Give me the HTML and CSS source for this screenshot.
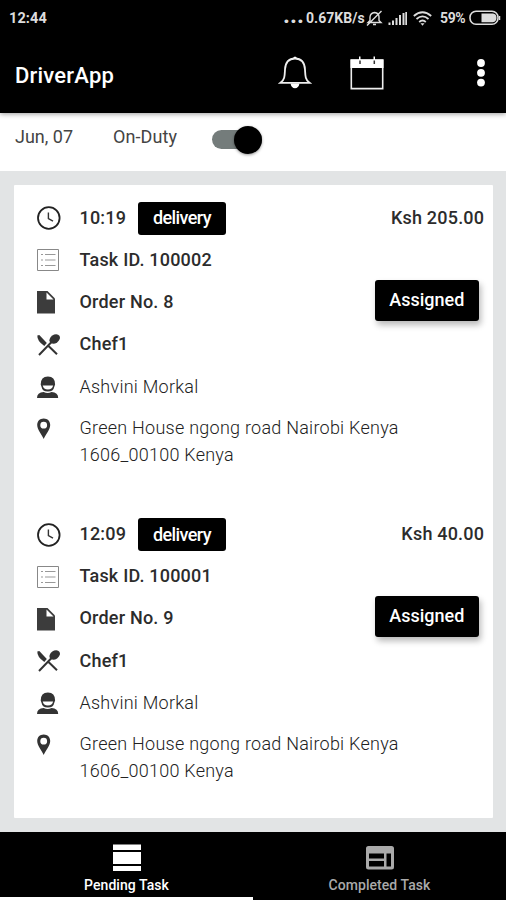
FILE: index.html
```html
<!DOCTYPE html>
<html lang="en">
<head>
<meta charset="utf-8">
<title>DriverApp</title>
<link rel="stylesheet" href="styles.css">
</head>
<body>
<svg class="defs" width="0" height="0">
  <symbol id="clock" viewBox="0 0 24 24"><circle cx="11.8" cy="12" r="10.8" fill="none" stroke="#222" stroke-width="1.8"/><path d="M11.4 6.5v6l4.6 2.7" fill="none" stroke="#333" stroke-width="1.4"/></symbol>
  <symbol id="list" viewBox="0 0 24 24"><path d="M.5 1.500h21v21H.5z" fill="none" stroke="#888" stroke-width="1"/><path d="M4 6.500h2M4 12h2M4 17.500h2M8 6.500h10.500M8 12h10.500M8 17.500h10.500" stroke="#999" stroke-width="1.200"/></symbol>
  <symbol id="doc" viewBox="0 0 24 24"><path d="M0 1h10.500l7.500 7.500V23.500H0z" fill="#3c3c3c"/><path d="M9.500 2.500v7H16.500z" fill="#fff"/></symbol>
  <symbol id="tools" viewBox="0 0 24 24"><path d="M2 22L15.500 8M11 12.500l9 8.800" fill="none" stroke="#333" stroke-width="2"/><path d="M.3 2.500l2-.5 7.500 8-2.500 3Q0 8 .3 2.500z" fill="#333"/><ellipse cx="17.700" cy="6" rx="5.700" ry="4.200" transform="rotate(-35 17.700 6)" fill="#333"/></symbol>
  <symbol id="person" viewBox="0 0 24 24"><path d="M3.700 9.500Q3.700 1.500 10.900 1.500t7.200 8l-.9 2.500Q16.500 16.500 10.900 16.500T4.600 12z" fill="#333"/><path d="M5.700 10.500h10.400q-.8 4-5.200 4t-5.200-4z" fill="#fff"/><path d="M0 23q0-5.500 6.700-6 3.900 2 7.800 0 6.700.5 6.700 6z" fill="#333"/></symbol>
  <symbol id="pin" viewBox="0 0 24 24"><path fill-rule="evenodd" d="M6.700 1.500C2.800 1.500.2 4.300.2 8c0 5 4.500 9 6.500 14 2-5 6.500-9 6.500-14 0-3.700-2.600-6.500-6.500-6.500zm0 3.300a3.400 3.400 0 1 1 0 6.800 3.400 3.400 0 0 1 0-6.800z" fill="#333"/></symbol>
</svg>
<div class="app">
  <header class="top">
    <div class="status">
      <span class="time">12:44</span>
      <span class="dots">...</span>
      <span class="rate">0.67KB/s</span>
      <svg class="mute" width="17" height="17" viewBox="0 0 17 17" fill="none" stroke="#ddd" stroke-width="1.400"><path d="M2 12.500l2-2V7q.5-4 4.500-4.500Q13 3 13 7v3.500l2 2zM7 14.500h3M1 15.500L15.500 1"/></svg>
      <svg class="signal" width="19" height="14" viewBox="0 0 19 14" stroke="#ddd" stroke-width="2"><path d="M1.500 11.500V14M5 9.500V14M8.500 7V14M12 4V14M15.500 2V14M18.300 1V14"/></svg>
      <svg class="wifi" width="19" height="15" viewBox="0 0 19 15" fill="none" stroke="#ddd" stroke-width="1.800"><path d="M.8 5Q9.500-2.500 18.200 5M3.500 8Q9.500 2.800 15.500 8M6.200 11Q9.500 8 12.800 11"/><path d="M7.500 12.300h4L9.500 14.800z" fill="#ddd" stroke="none"/></svg>
      <span class="pct">59%</span>
      <svg class="battery" width="32" height="16" viewBox="0 0 32 16"><rect x="1" y="1.200" width="28" height="13" rx="6" fill="none" stroke="#ddd" stroke-width="1.600"/><path d="M12.500 3.500H24q3.500.5 3.500 4.200T24 12.200H12.500z" fill="#ddd"/><path d="M30.500 6v4" stroke="#ddd" stroke-width="1.500"/></svg>
    </div>
    <div class="bar">
      <h1>DriverApp</h1>
      <svg class="bell" width="34" height="34" viewBox="0 0 34 34"><path d="M2.500 27.800C7 24.500 6.700 20 7 14.500 7.400 7 10.500 3.500 17 3.500S26.600 7 27 14.500c.3 5.500 0 10 4.500 13.300z" fill="none" stroke="#eee" stroke-width="1.800"/><path d="M15 3q2-3 4 0zM12.500 28.500h9Q20.500 33.300 17 33.300t-4.500-4.800z" fill="#fff"/></svg>
      <svg class="cal" width="34" height="34" viewBox="0 0 34 34"><path d="M1.300 4h31.400v28.600H1.300z" fill="none" stroke="#eee" stroke-width="1.600"/><path d="M.5 3.500h33v8.500H.5zM9 .5h1.500v4H9zM23.500.5H25v4h-1.500z" fill="#fff"/><path d="M10 4.500v3.500M24.300 4.500v3.500" stroke="#333" stroke-width="1.500"/></svg>
      <svg class="more" width="8" height="28" viewBox="0 0 8 28" fill="#fff"><circle cx="4" cy="4" r="3.900"/><circle cx="4" cy="13.800" r="3.900"/><circle cx="4" cy="23.600" r="3.900"/></svg>
    </div>
  </header>
  <section class="duty">
    <span class="date">Jun, 07</span>
    <span class="duty-label">On-Duty</span>
    <span class="switch"><span class="knob"></span></span>
  </section>
  <main>
    <div class="card">
      <article class="task">
        <div class="row"><svg class="icon"><use href="#clock"/></svg><b class="hour">10:19</b><span class="tag">delivery</span><b class="price">Ksh 205.00</b></div>
        <div class="row"><svg class="icon"><use href="#list"/></svg><b>Task ID. 100002</b></div>
        <div class="row"><svg class="icon"><use href="#doc"/></svg><b>Order No. 8</b><button class="assigned">Assigned</button></div>
        <div class="row"><svg class="icon"><use href="#tools"/></svg><b>Chef1</b></div>
        <div class="row"><svg class="icon"><use href="#person"/></svg><span class="name">Ashvini Morkal</span></div>
        <div class="row address"><svg class="icon"><use href="#pin"/></svg><p>Green House ngong road Nairobi Kenya<br>1606_00100 Kenya</p></div>
      </article>
      <article class="task">
        <div class="row"><svg class="icon"><use href="#clock"/></svg><b class="hour">12:09</b><span class="tag">delivery</span><b class="price">Ksh 40.00</b></div>
        <div class="row"><svg class="icon"><use href="#list"/></svg><b>Task ID. 100001</b></div>
        <div class="row"><svg class="icon"><use href="#doc"/></svg><b>Order No. 9</b><button class="assigned">Assigned</button></div>
        <div class="row"><svg class="icon"><use href="#tools"/></svg><b>Chef1</b></div>
        <div class="row"><svg class="icon"><use href="#person"/></svg><span class="name">Ashvini Morkal</span></div>
        <div class="row address"><svg class="icon"><use href="#pin"/></svg><p>Green House ngong road Nairobi Kenya<br>1606_00100 Kenya</p></div>
      </article>
    </div>
  </main>
  <nav>
    <div class="tab active"><svg width="28" height="28" viewBox="0 0 28 28" fill="#fff"><path d="M0 .5h28v5.500H0zM0 8h28v12H0zM0 22h28v5H0z"/></svg><span>Pending Task</span></div>
    <div class="tab"><svg width="28" height="28" viewBox="0 0 28 28" fill="#aaa"><path fill-rule="evenodd" d="M2.500 2h23Q28 2 28 4.500v18.500q0 2.500-2.500 2.500h-23Q0 25.500 0 23V4.500Q0 2 2.500 2zM3 9.500v5h15v-5zm0 7.500v5.500h15V17zM20.500 9.500v13h4.500v-13z"/></svg><span>Completed Task</span></div>
  </nav>
  <div class="strip"></div>
</div>
</body>
</html>
```
FILE: styles.css
```css
* { box-sizing: border-box; }
body { margin: 0; font-family: Roboto, sans-serif; background: #e2e4e5; }
.defs { display: block; }
.app { width: 506px; height: 900px; display: flex; flex-direction: column; overflow: hidden; }
svg { flex: none; }

.top { height: 113px; background: #000; color: #fff; z-index: 1; box-shadow: 0 1px 5px rgba(0,0,0,.4); }
.status { height: 36px; display: flex; align-items: center; padding: 0 5px 0 9px; font-size: 14px; font-weight: 700; color: #ddd; white-space: nowrap; }
.time { letter-spacing: .1px; font-size: 14.5px; }
.dots { margin-left: auto; font-size: 24px; line-height: 20px; margin-top: -7px; width: 23px; }
.rate { width: 61px; letter-spacing: .05px; }
.mute { margin-left: -1px; }
.signal { margin-left: 5px; }
.wifi { margin-left: 6px; }
.pct { margin-left: 8px; width: 29px; font-size: 14px; letter-spacing: -.4px; }
.bar { height: 77px; display: flex; align-items: center; padding: 0 21px 0 15px; }
h1 { margin: 1px 0 0; width: 263px; font-size: 22px; font-weight: 500; letter-spacing: .2px; }
.bell { margin-top: -5px; }
.cal { margin: -3px 0 0 38px; }
.more { margin: -4px 0 0 auto; }

.duty { height: 58px; background: #fff; display: flex; align-items: center; padding: 0 15px; font-size: 18px; font-weight: 400; color: #444; }
.date { width: 98px; margin-top: -12px; }
.duty-label { width: 99px; margin-top: -12px; letter-spacing: .1px; }
.switch { width: 50px; height: 19px; margin-top: -5px; border-radius: 10px; background: #747c7b; display: flex; align-items: center; justify-content: flex-end; }
.knob { width: 28px; height: 28px; flex: none; border-radius: 50%; background: #000; box-shadow: 0 1px 3px rgba(0,0,0,.4); }

main { height: 661px; padding: 14px 13px 14px 14px; background: #e2e4e5; }
.card { height: 633px; background: #fff; border-radius: 1px; padding: 12px 9px 0 23px; }
.task { height: 316.500px; color: #333; font-size: 18px; }
.row { height: 42.200px; display: flex; align-items: center; white-space: nowrap; }
.icon { width: 24px; height: 24px; margin-right: 18.500px; }
.row b { font-weight: 500; color: #2c2c2c; letter-spacing: .2px; margin-top: -2px; }
.row .hour { width: 58.500px; }
.tag { width: 88px; height: 33px; border-radius: 3px; background: #000; color: #fff; display: flex; align-items: center; justify-content: center; font-weight: 500; letter-spacing: -.6px; padding-bottom: 1px; }
.row .price { margin-left: auto; margin-right: -.2px; }
.assigned { margin: -4px 5.500px 0 auto; width: 103.500px; height: 41px; padding: 0 0 2px; border: 0; border-radius: 3px; background: #000; color: #fff; font: 500 18px Roboto, sans-serif; box-shadow: 2px 4px 6px rgba(0,0,0,.28); }
.name, .address p { font-weight: 300; color: #222; letter-spacing: .25px; }
.name { margin-top: -1px; }
.address { height: auto; align-items: flex-start; padding-top: 7px; }
.address .icon { margin-top: 2px; }
.address p { margin: -1px 0 0; line-height: 27px; }

nav { height: 65px; background: #000; display: flex; }
.tab { flex: 1; display: flex; flex-direction: column; align-items: center; padding-top: 11.500px; color: #aaa; font-size: 14px; font-weight: 500; }
.tab span { margin-top: 5px; letter-spacing: .05px; }
.active { color: #fff; }
.strip { height: 3px; background: linear-gradient(90deg, #fff 50%, #000 50%); }
```
